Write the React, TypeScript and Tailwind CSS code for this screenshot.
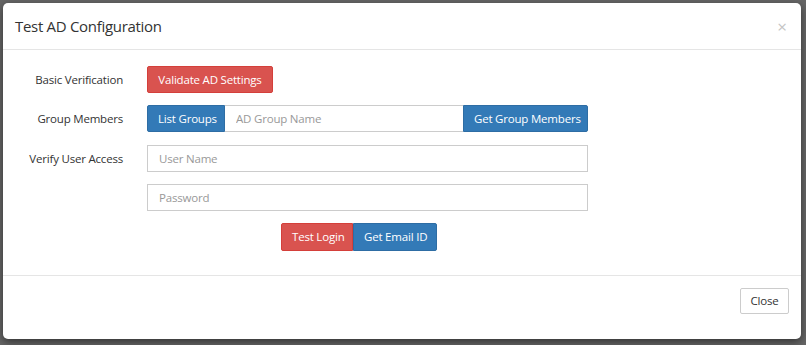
import React from 'react';

const font = { fontFamily: '"Open Sans", "Noto Sans", Arial, sans-serif' };

function Label({ children }: { children: React.ReactNode }) {
  return (
    <div className="w-[105px] shrink-0 text-right text-[11.5px] tracking-[-0.2px] text-[#333] leading-none whitespace-nowrap">
      {children}
    </div>
  );
}

function Btn({ color, className = '', children }: { color: 'red' | 'blue'; className?: string; children: React.ReactNode }) {
  const c =
    color === 'red'
      ? 'bg-[#d9534f] border-[#d43f3a]'
      : 'bg-[#337ab7] border-[#2e6da4]';
  return (
    <button
      className={`${c} border text-white text-[11.5px] tracking-[-0.2px] px-[10px] leading-none whitespace-nowrap ${className}`}
    >
      {children}
    </button>
  );
}

function Input({ placeholder, className = '' }: { placeholder: string; className?: string }) {
  return (
    <input
      placeholder={placeholder}
      className={`border border-[#ccc] bg-white px-[11px] text-[11.5px] tracking-[-0.2px] text-[#555] placeholder:text-[#999] outline-none ${className}`}
    />
  );
}

export default function App() {
  return (
    <div className="w-[806px] h-[345px] bg-[#666] pt-[3px] pl-[3px]" style={font}>
      <div className="w-[798px] h-[336px] bg-white rounded-[5px] shadow-[0_3px_9px_rgba(0,0,0,0.5)] flex flex-col">
        <div className="h-[47px] border-b border-[#e5e5e5] flex items-center justify-between pl-[12px] pr-[14px]">
          <h4 className="text-[15px] tracking-[-0.3px] text-[#333] pt-[1px]">Test AD Configuration</h4>
          <span className="text-[#c4c4c4] text-[17px] leading-none">×</span>
        </div>

        <div className="flex flex-col pt-[16px] pl-[15px] pb-[24px]">
          <div className="flex items-center h-[27px] gap-[24px]">
            <Label>Basic Verification</Label>
            <Btn color="red" className="h-[27px] w-[126px] rounded-[2px]">Validate AD Settings</Btn>
          </div>
          <div className="flex items-center h-[27px] gap-[24px] mt-[12px]">
            <Label>Group Members</Label>
            <div className="flex h-[27px] w-[441px]">
              <Btn color="blue" className="w-[78px] rounded-l-[2px]">List Groups</Btn>
              <Input placeholder="AD Group Name" className="flex-1 min-w-0 border-x-0" />
              <Btn color="blue" className="w-[125px] rounded-r-[2px]">Get Group Members</Btn>
            </div>
          </div>
          <div className="flex items-center h-[27px] gap-[24px] mt-[13px]">
            <Label>Verify User Access</Label>
            <Input placeholder="User Name" className="w-[441px] h-[27px]" />
          </div>
          <div className="flex items-center h-[27px] gap-[24px] mt-[12px]">
            <div className="w-[105px] shrink-0" />
            <Input placeholder="Password" className="w-[441px] h-[27px]" />
          </div>
          <div className="flex h-[28px] mt-[12px] pl-[263px]">
            <Btn color="red" className="w-[72px] rounded-l-[2px]">Test Login</Btn>
            <Btn color="blue" className="w-[84px] rounded-r-[2px]">Get Email ID</Btn>
          </div>
        </div>

        <div className="border-t border-[#e5e5e5] flex justify-end pt-[12px] pr-[12px]">
          <button className="h-[26px] w-[49px] border border-[#ccc] rounded-[2px] bg-white text-[11.5px] tracking-[-0.2px] text-[#333] leading-none">
            Close
          </button>
        </div>
      </div>
    </div>
  );
}
